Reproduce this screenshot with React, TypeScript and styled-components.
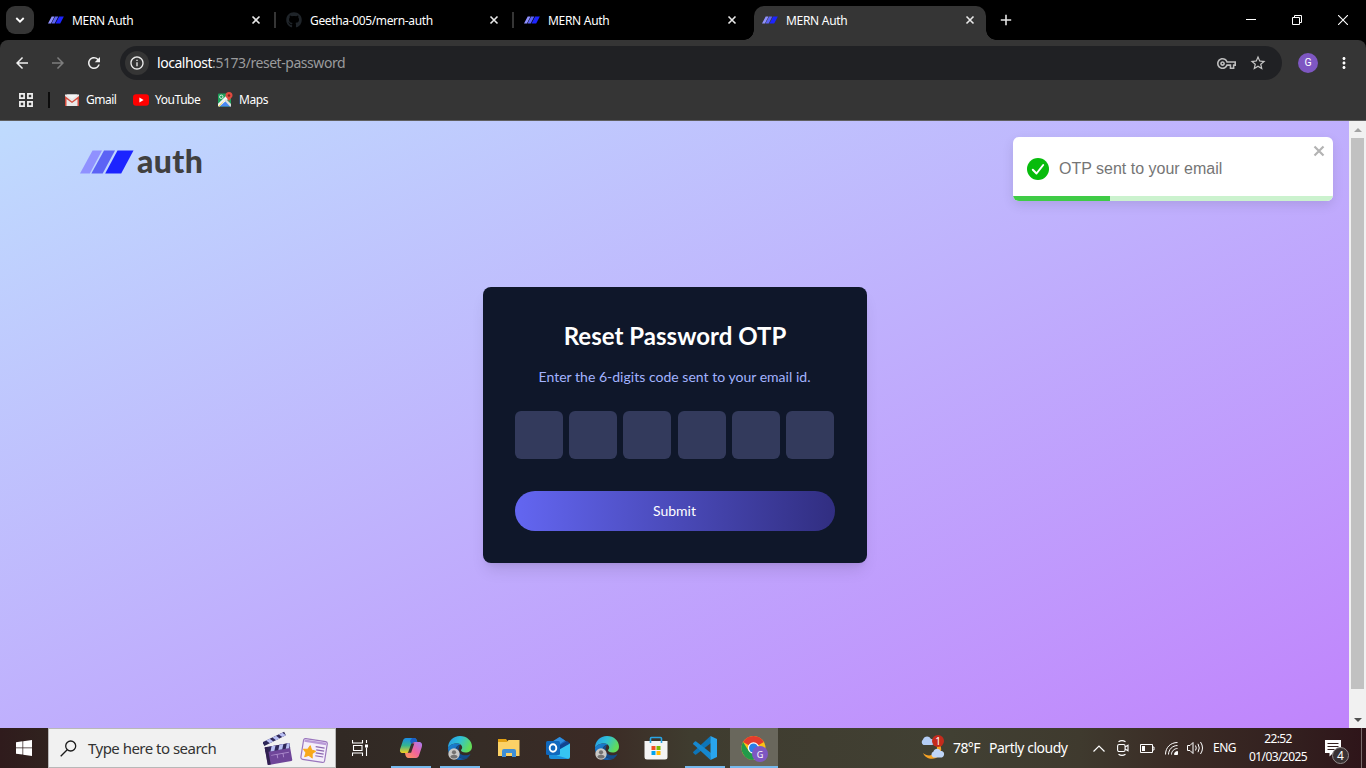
import React from 'react';
import styled, { createGlobalStyle, css } from 'styled-components';
import { MdArrowBack, MdArrowForward, MdRefresh, MdStarBorder, MdOutlineVpnKey, MdMoreVert, MdInfoOutline } from 'react-icons/md';
import { FaGithub } from 'react-icons/fa';

const Global = createGlobalStyle`
  * { box-sizing: border-box; }
  body { margin: 0; overflow: hidden; }
  svg { display: block; flex: none; }
`;

const ui = `"Noto Sans", "Open Sans", sans-serif`;

const Desktop = styled.div`
  width: 1366px;
  height: 768px;
  display: flex;
  flex-direction: column;
  overflow: hidden;
  background: #000;
  font-family: ${ui};
`;

const Label = styled.span<{ $size?: number; $ls?: number; $color?: string }>`
  font-size: ${p => p.$size ?? 12}px;
  letter-spacing: ${p => p.$ls ?? 0}px;
  color: ${p => p.$color ?? '#fff'};
  white-space: nowrap;
  line-height: 20px;
`;

/* ---------- tab strip ---------- */
const TabStrip = styled.header`
  display: flex;
  flex: none;
  height: 40px;
  padding-left: 6px;
  background: #000;
`;
const TabSearch = styled.button`
  width: 28px;
  height: 28px;
  margin: 6px 6px 0 0;
  padding: 0;
  border: 0;
  border-radius: 9px;
  background: #353535;
  display: grid;
  place-items: center;
`;
const Tab = styled.div<{ $active?: boolean; $divider?: boolean }>`
  position: relative;
  width: ${p => (p.$active ? 232 : 238)}px;
  height: ${p => (p.$active ? 34 : 28)}px;
  margin-top: 6px;
  padding: 0 ${p => (p.$active ? 10 : 16)}px 0 8px;
  display: flex;
  align-items: ${p => (p.$active ? 'flex-start' : 'center')};
  ${p => p.$active && css`
    padding-top: 4px;
    border-radius: 10px 10px 0 0;
    background: #353535;
    &::before, &::after {
      content: '';
      position: absolute;
      bottom: 0;
      width: 10px;
      height: 10px;
    }
    &::before { left: -10px; background: radial-gradient(circle at 0 0, transparent 9.5px, #353535 10px); }
    &::after { right: -10px; background: radial-gradient(circle at 100% 0, transparent 9.5px, #353535 10px); }
  `}
  ${p => p.$divider && css`
    &::after {
      content: '';
      position: absolute;
      right: 2px;
      top: 6px;
      width: 2px;
      height: 16px;
      background: #353535;
    }
  `}
`;
const TabBody = styled.div`
  flex: 1;
  height: 20px;
  display: flex;
  align-items: center;
  gap: 8px;
`;
const TabTitle = styled(Label)`
  flex: 1;
  padding-top: 1px;
`;
const NewTab = styled.div`
  width: 40px;
  height: 40px;
  display: grid;
  place-items: center;
`;
const WindowControls = styled.div`
  margin-left: auto;
  display: flex;
`;
const WindowButton = styled.div`
  width: 46px;
  height: 40px;
  display: grid;
  place-items: center;
`;

/* ---------- toolbar ---------- */
const Chrome = styled.div`
  flex: none;
  height: 81px;
  border-radius: 8px 8px 0 0;
  border-bottom: 1px solid #5f5f5f;
  background: #353535;
`;
const Toolbar = styled.div`
  height: 46px;
  padding: 0 12px 0 13px;
  display: flex;
  align-items: center;
`;
const NavButton = styled.div`
  flex: none;
  width: 18px;
  height: 34px;
  margin-right: 18px;
  display: grid;
  place-items: center;
`;
const Omnibox = styled.div`
  flex: none;
  width: 1162px;
  height: 34px;
  margin-left: -1px;
  padding: 0 15px 0 5px;
  border-radius: 17px;
  background: #202124;
  display: flex;
  align-items: center;
`;
const SiteInfo = styled.div`
  width: 24px;
  height: 24px;
  margin-right: 8px;
  border-radius: 50%;
  background: #353535;
  display: grid;
  place-items: center;
`;
const Url = styled(Label)`
  flex: 1;
  b { font-weight: 400; color: #fff; }
`;
const KeyIcon = styled(MdOutlineVpnKey)`
  margin-right: 13px;
`;
const Avatar = styled.div`
  flex: none;
  width: 20px;
  height: 20px;
  margin: 0 17px 0 16px;
  border-radius: 50%;
  background: #7e57c2;
  color: #fff;
  font: 10.5px/20px Roboto, sans-serif;
  text-align: center;
`;
const Bookmarks = styled.div`
  height: 28px;
  padding-left: 19px;
  display: flex;
  align-items: center;
`;
const BookmarkDivider = styled.div`
  width: 2px;
  height: 16px;
  margin: 0 14px 0 15px;
  background: #0c0c0c;
`;
const Bookmark = styled.div<{ $w: number }>`
  width: ${p => p.$w}px;
  display: flex;
  align-items: center;
  gap: 6px;
`;

/* ---------- page ---------- */
const Viewport = styled.div`
  flex: none;
  height: 607px;
  display: flex;
`;
const Page = styled.main`
  position: relative;
  width: 1349px;
  display: flex;
  align-items: center;
  justify-content: center;
  background: linear-gradient(to bottom right, #bfdbfe, #c084fc);
`;
const Brand = styled.div`
  position: absolute;
  left: 80px;
  top: 20px;
  height: 42px;
  display: flex;
  align-items: center;
  gap: 3px;
`;
const BrandName = styled.span`
  font: 900 32px/42px Lato, sans-serif;
  letter-spacing: 0.4px;
  color: #404040;
  margin-top: -2px;
`;
const Card = styled.form`
  width: 384px;
  height: 276px;
  margin-left: 1px;
  padding: 32px;
  border-radius: 8px;
  background: #0f172a;
  box-shadow: 0 10px 15px -3px rgba(0, 0, 0, 0.1), 0 4px 6px -4px rgba(0, 0, 0, 0.1);
  font-family: Lato, sans-serif;
  text-align: center;
`;
const Heading = styled.h1`
  margin: 0 0 16px;
  padding-top: 1px;
  height: 32px;
  font-size: 24px;
  line-height: 32px;
  font-weight: 700;
  letter-spacing: 0.03px;
  color: #fff;
`;
const Hint = styled.p`
  margin: 0 1px 24px 0;
  font-size: 14px;
  line-height: 20px;
  letter-spacing: 0.02px;
  color: #a3b3ff;
`;
const Digits = styled.div`
  display: flex;
  gap: 6.2px;
  margin-bottom: 32px;
`;
const Digit = styled.input`
  width: 48px;
  height: 48px;
  padding: 0;
  border: 0;
  border-radius: 6px;
  background: #333a5c;
`;
const Submit = styled.button`
  display: block;
  width: 320px;
  height: 40px;
  padding: 0 1px 0 0;
  border: 0;
  border-radius: 20px;
  background: linear-gradient(to right, #6366f1, #312e81);
  color: #fff;
  font: 14px/40px Lato, sans-serif;
`;
const ToastFrame = styled.div`
  position: absolute;
  right: 16px;
  top: 16px;
  border-radius: 6px;
  box-shadow: 0 4px 12px rgba(0, 0, 0, 0.1);
`;
const Toast = styled.div`
  position: relative;
  width: 320px;
  height: 64px;
  padding: 0 14px;
  border-radius: 6px;
  overflow: hidden;
  display: flex;
  align-items: center;
  gap: 10px;
  background: #fff;
  color: #757575;
  font: 16px/20px "Liberation Sans", Arial, sans-serif;
`;
const ToastClose = styled.div`
  position: absolute;
  right: 8px;
  top: 8px;
`;
const Progress = styled.div`
  position: absolute;
  left: 0;
  right: 0;
  bottom: 0;
  height: 5px;
  background: linear-gradient(to right, #3fcb46 97px, #cbf2ce 97px);
`;
const Scrollbar = styled.div`
  width: 17px;
  padding: 0 2px;
  background: #f1f1f1;
  display: flex;
  flex-direction: column;
  align-items: center;
`;
const ScrollArrow = styled.div`
  height: 17px;
  display: grid;
  place-items: center;
`;
const Thumb = styled.div`
  width: 13px;
  height: 551px;
  margin-bottom: 22px;
  background: #c1c1c1;
`;

/* ---------- taskbar ---------- */
const Taskbar = styled.footer`
  flex: none;
  height: 40px;
  display: flex;
  align-items: center;
  background: linear-gradient(to right, #2f1b1c 0, #30241f 60px, #312924 340px, #352c26 480px, #3b2a25 600px, #3f3c2f 690px, #414033 950px, #3f3a2e 1080px, #3a2b25 1180px, #33201f 1290px, #2e1419 1366px);
`;
const Start = styled.div`
  width: 48px;
  height: 40px;
  display: grid;
  place-items: center;
`;
const Search = styled.div`
  width: 288px;
  height: 40px;
  padding: 0 7px 0 11px;
  border: 1px solid #b8b8b8;
  background: #f1f1f1;
  display: flex;
  align-items: center;
`;
const SearchText = styled(Label)`
  flex: 1;
  margin-left: 11px;
`;
const SearchArt = styled.div`
  display: flex;
  align-items: flex-end;
  gap: 5px;
  padding-top: 2px;
`;
const TaskView = styled.div`
  width: 51px;
  display: grid;
  place-items: center;
  padding-right: 3px;
`;
const TaskButton = styled.div<{ $open?: boolean; $active?: boolean }>`
  position: relative;
  width: ${p => (p.$active ? 48 : 49)}px;
  height: 40px;
  padding-right: ${p => (p.$active ? 0 : 2)}px;
  display: grid;
  place-items: center;
  background: ${p => (p.$active ? '#69675c' : 'transparent')};
  &::after {
    content: '';
    position: absolute;
    bottom: 0;
    left: ${p => (p.$active ? 0 : 4)}px;
    right: ${p => (p.$active ? 0 : 5)}px;
    height: 2px;
    background: ${p => (p.$open ? '#76b9ed' : 'transparent')};
  }
`;
const Tray = styled.div`
  margin-left: auto;
  width: 446px;
  height: 40px;
  display: flex;
  align-items: center;
`;
const Weather = styled.div`
  position: relative;
  width: 25px;
  margin: -2px 8px 0 0;
`;
const Badge = styled.div<{ $x: number; $y: number; $d: number; $bg: string; $border?: string; $size: number }>`
  position: absolute;
  left: ${p => p.$x}px;
  top: ${p => p.$y}px;
  width: ${p => p.$d}px;
  height: ${p => p.$d}px;
  border-radius: 50%;
  background: ${p => p.$bg};
  border: ${p => (p.$border ? `1px solid ${p.$border}` : '0')};
  color: #fff;
  display: flex;
  align-items: center;
  justify-content: center;
  font-size: ${p => p.$size}px;
  line-height: 1;
`;
const TrayIcon = styled.div<{ $w: number; $start?: boolean }>`
  flex: none;
  width: ${p => p.$w}px;
  display: grid;
  align-items: center;
  justify-content: ${p => (p.$start ? 'start' : 'center')};
`;
const Clock = styled.div`
  flex: none;
  width: 66px;
  display: flex;
  flex-direction: column;
  align-items: center;
  span { line-height: 18px; }
`;
const Notifications = styled.div`
  position: relative;
  width: 24px;
  margin-left: 13px;
`;
const ShowDesktop = styled.div`
  margin-left: auto;
  width: 5px;
  height: 40px;
  border-left: 1px solid #7a6b6c;
`;

const Stripes = ({ w, h }: { w: number; h: number }) => (
  <svg width={w} height={h} viewBox="0 0 54 24">
    <path d="M12.500 0.500H22L9.800 23.500H0Z" fill="#9091ff" />
    <path d="M24 0.500H35L22.700 23.500H11.400Z" fill="#5c63f5" />
    <path d="M37.500 0.500H53.500L41.200 23.500H25.200Z" fill="#1c24ff" />
  </svg>
);

const CloseX = () => (
  <svg width="12" height="12" viewBox="0 0 12 12" stroke="#e8e8e8" strokeWidth="1.600">
    <path d="M2.500 2.500l7 7M9.500 2.500l-7 7" />
  </svg>
);

const Gmail = () => (
  <svg width="16" height="16" viewBox="0 0 16 16">
    <path d="M1 2.500h14v11.500H1z" fill="#e9e9e9" />
    <path d="M1 14V4l7 5.500L15 4v10h-1.500V7L8 11 2.500 7V14z" fill="#d54b3d" />
    <path d="M2.500 2.500h11L8 7z" fill="#f4f4f4" />
  </svg>
);
const YouTube = () => (
  <svg width="16" height="16" viewBox="0 0 16 16">
    <rect y="2.300" width="16" height="11.400" rx="3" fill="#f00" />
    <path d="M6.400 5.600v4.800L10.600 8z" fill="#fff" />
  </svg>
);
const MapsIcon = () => (
  <svg width="16" height="16" viewBox="0 0 16 16">
    <rect x="1" y="1.500" width="13" height="13" rx="1" fill="#1fa05b" />
    <path d="M7.500 8L14 14.500H1.500z" fill="#4a89f3" />
    <path d="M1 14V11.800L11 2l3 2.500L2.500 14.500z" fill="#f5f5f5" />
    <path d="M7.500 8.500L9 7l5 5v2.500h-1z" fill="#ddd" />
    <path d="M1 14.300L2 13.500l5.500-5.300L2.500 14.500z" fill="#fbcf3f" />
    <circle cx="4.300" cy="4.800" r="1.700" fill="none" stroke="#d9f0e2" strokeWidth="1" />
    <path d="M12 0a3.500 3.500 0 0 1 3.500 3.500C15.500 5.700 12.700 6.500 12 10 11.300 6.500 8.500 5.700 8.500 3.500A3.500 3.500 0 0 1 12 0z" fill="#e04a3f" />
    <circle cx="12" cy="3.500" r="1.200" fill="#7d221b" />
  </svg>
);

const Edge = ({ id }: { id: string }) => (
  <svg width="26" height="26" viewBox="0 0 26 26">
    <defs>
      <linearGradient id={`${id}a`} x1="0" y1="0" x2="1" y2="0.4">
        <stop offset="0" stopColor="#2695e8" /><stop offset=".5" stopColor="#2fc0d8" /><stop offset="1" stopColor="#62dc59" />
      </linearGradient>
      <linearGradient id={`${id}b`} x1="0" y1="0" x2="1" y2="1">
        <stop offset="0" stopColor="#1b85d6" /><stop offset="1" stopColor="#0f4f9c" />
      </linearGradient>
    </defs>
    <path d="M1 13C1 6 6 1 13 1s12 5 12 10.500c0 4-3 6-6.500 6-3 0-4.500-1.200-4.500-2.200 0-.8 1.200-1 1.200-2.800 0-2.200-2-4-5-4C5.500 8.500 2 10.500 1 13z" fill={`url(#${id}a)`} />
    <path d="M1 13C2 10.500 5.500 8.500 10 8.500c1.500 0 2.800.5 3.700 1.200C10 10 8.500 13 8.500 15.500c0 5 4 8 8 8 2.500 0 4.500-.7 5.500-1.500C20 24 17 25 13 25 6 25 1 20 1 13z" fill={`url(#${id}b)`} />
    <path d="M13 10c-3 .8-4.500 3-4.500 5.500 0 5 4.500 8 8.500 8 3 0 5.500-2 6.500-4.500-1.500.9-3 1.300-5 1.300-4 0-7-2-7-5.300C11.500 12.500 12.500 11 13 10z" fill="#124c8c" />
    <circle cx="7" cy="19" r="5.700" fill="#c9c8c6" />
    <circle cx="7" cy="17.300" r="2.100" fill="#747271" />
    <path d="M3.300 22c.5-3 7-3 7.400 0-2 2-5.500 2-7.400 0z" fill="#747271" />
  </svg>
);

const Copilot = () => (
  <svg width="24" height="24" viewBox="0 0 24 24">
    <defs>
      <linearGradient id="cpa" x1="0" y1="0" x2="0" y2="1"><stop offset="0" stopColor="#1b8ce8" /><stop offset=".5" stopColor="#35b58f" /><stop offset="1" stopColor="#f4d020" /></linearGradient>
      <linearGradient id="cpb" x1="1" y1="0" x2="0" y2="1"><stop offset="0" stopColor="#a67cf5" /><stop offset=".5" stopColor="#f1639c" /><stop offset="1" stopColor="#ff9a52" /></linearGradient>
    </defs>
    <path d="M7 2h8c2 0 2.700 1.500 3.300 4h-3c-1.800 0-2.500 1.500-3 3l-2 6c-.5 1.500-1.300 2-3 2H4c-3 0-3.500-2-2.700-4.500L4 4.500C4.500 3 5.500 2 7 2z" fill="url(#cpa)" />
    <path d="M13 2h2c2 0 2.700 1.500 3.300 4h-3c-1.500 0-2.300 1-2.800 2.500L11 5z" fill="#1b5ec6" />
    <path d="M17 22H9.500c-2 0-3-1.500-3.500-5h2c2 0 2.500-1 3-2.500l2-6C13.500 7 14.300 6 16 6h4c3 0 3.500 2.500 2.800 5L20 19.500c-.5 1.500-1.500 2.500-3 2.500z" fill="url(#cpb)" />
    <path d="M12 8.500l.7-1h2.600l-3.200 9.300H9z" fill="#38302d" />
  </svg>
);

const Explorer = () => (
  <svg width="24" height="24" viewBox="0 0 24 24">
    <path d="M1 3h8l2 2.500h11V20H1z" fill="#e2a012" />
    <path d="M1 6h9l1.500-2H22.500v16H1z" fill="#fcd266" />
    <path d="M5 21v-6q0-2 2-2h10q2 0 2 2v6h-4v-4H9v4z" fill="#3f8fd6" />
  </svg>
);

const Outlook = () => (
  <svg width="26" height="26" viewBox="0 0 26 26">
    <path d="M4 9L15 2l10 7v12H4z" fill="#1a63b8" />
    <path d="M5 8l9.500-6L20 5.500 9 13z" fill="#2e8fe0" />
    <path d="M14 14L25 8v14q0 2-2 2H10z" fill="#36c5f2" />
    <path d="M25 8.500L10 17v-4l12-7z" fill="#12448e" />
    <path d="M4 18l20 6H6q-2 0-2-2z" fill="#1c8fdc" />
    <rect x="1" y="6" width="14" height="14" rx="1.500" fill="#1068bd" />
    <ellipse cx="8" cy="13" rx="3.300" ry="3.700" fill="none" stroke="#fff" strokeWidth="1.900" />
  </svg>
);

const Store = () => (
  <svg width="24" height="24" viewBox="0 0 24 24">
    <path d="M.5 5h23v16q0 2.500-2.500 2.500H3Q.5 23.500.5 21z" fill="#f4f4f4" />
    <path d="M6.500 7V2.500Q6.500 1.500 7.500 1.500h9q1 0 1 1V7" fill="none" stroke="#2aa5e4" strokeWidth="1.600" />
    <path d="M7.500 10H11.500V14H7.500z" fill="#f25022" /><path d="M12.500 10h4v4h-4z" fill="#7fba00" />
    <path d="M7.500 15h4v4h-4z" fill="#00a4ef" /><path d="M12.500 15h4v4h-4z" fill="#ffb900" />
  </svg>
);

const VSCode = () => (
  <svg width="24" height="24" viewBox="0 0 24 24">
    <path d="M17.500 0L.4 15.700q-.7.700 0 1.400l1.500 1.300q.6.500 1.300 0L18 7z" fill="#0d75b8" />
    <path d="M17.500 24L.4 8.300q-.7-.7 0-1.400l1.500-1.300q.6-.5 1.300 0L18 17z" fill="#1688cf" />
    <path d="M17.500 0L24 3v18l-6.500 3z" fill="#29a5ee" />
  </svg>
);

const ChromeIcon = () => (
  <svg width="26" height="26" viewBox="0 0 26 26">
    <circle cx="12.500" cy="13" r="12" fill="#fbc116" />
    <path d="M12.500 13L2.100 7a12 12 0 0 1 20.800 0z" fill="#e33b2e" />
    <path d="M2.100 7a12 12 0 0 0 10.400 18l5-9.500-10 .3z" fill="#229a4a" />
    <circle cx="12.500" cy="13" r="5.700" fill="#fff" />
    <circle cx="12.500" cy="13" r="4.500" fill="#2b7de9" />
  </svg>
);

const Clapper = () => (
  <svg width="32" height="36" viewBox="0 0 32 36">
    <g transform="rotate(-26 2 14)">
      <rect x="1" y="10.500" width="24" height="4" fill="#2f2859" />
      <path d="M5 10.500h4l2 4H7zM12 10.500h4l2 4h-4zM19 10.500h4l2 4h-4z" fill="#b9bff4" />
    </g>
    <g transform="rotate(-10 4 18)">
      <rect x="2" y="16" width="25" height="18" rx="1" fill="#6f4599" />
      <rect x="2" y="16" width="25" height="5" fill="#2f2859" />
      <path d="M9 16h4l-2 5H7zM17 16h4l-2 5h-4zM24.500 16H27v2l-1 3h-3.500z" fill="#b9bff4" />
      <path d="M2 16h3v18H2z" fill="#30204f" />
      <path d="M7 25h18M13 25v4M19 25v4" stroke="#a988ca" strokeWidth="1" />
    </g>
  </svg>
);
const News = () => (
  <svg width="28" height="29" viewBox="0 0 28 29">
    <g transform="rotate(9 14 13)">
      <rect x="2" y="2" width="24" height="21" rx="2" fill="#f4eefb" stroke="#9a76bd" strokeWidth="1.200" />
      <path d="M3 3h22v2.500H3z" fill="#b99ad8" />
      <path d="M15 8.500h9M16 11.500h8M16 14.500h8M16 17.500h8" stroke="#8a68ae" strokeWidth="1.200" />
      <path d="M9.500 8.500l1.900 3.800 4.200.6-3 3 .7 4.200-3.800-2-3.800 2 .7-4.200-3-3 4.200-.6z" fill="#f8a91b" stroke="#f8a91b" strokeLinejoin="round" />
    </g>
  </svg>
);

const WeatherIcon = () => (
  <svg width="25" height="24" viewBox="0 0 25 24">
    <path d="M14 7c4 3 4 9 0 12-3 2-8 2-11-1 2 5 8 7 13 5 6-3 7-11 2-16z" fill="#f7a325" />
    <path d="M3.500 10A3.300 3.300 0 0 1 3 4.500C4 1 9 0 11 4c3 0 4 2 3.500 4-.3 1.300-1.300 2-2.500 2z" fill="#b4cdf5" />
    <path d="M13.500 22.500a3.200 3.200 0 0 1 0-6c1-3.500 6-3.500 7-.5 3 0 4 2 3.500 4s-2 2.500-3 2.500z" fill="#bfd5f7" />
  </svg>
);

const tabs = [
  { title: 'MERN Auth', divider: true, ls: -0.3 },
  { title: 'Geetha-005/mern-auth', divider: true, github: true, ls: -0.35 },
  { title: 'MERN Auth', ls: -0.3 },
  { title: 'MERN Auth', active: true, ls: -0.3 },
];

export default function App() {
  return (
    <Desktop>
      <Global />
      <TabStrip>
        <TabSearch aria-label="Search tabs">
          <svg width="10" height="8" viewBox="0 0 10 8" fill="none" stroke="#fff" strokeWidth="1.800"><path d="M1.300 2L5 5.700 8.700 2" /></svg>
        </TabSearch>
        {tabs.map((t, i) => (
          <Tab key={i} $active={t.active} $divider={t.divider}>
            <TabBody>
              {t.github ? <FaGithub size={16} color="#1f2429" /> : <Stripes w={16} h={8} />}
              <TabTitle $ls={t.ls}>{t.title}</TabTitle>
              <CloseX />
            </TabBody>
          </Tab>
        ))}
        <NewTab>
          <svg width="12" height="12" viewBox="0 0 12 12" stroke="#e3e3e3" strokeWidth="1.600"><path d="M6 .8v10.400M.8 6h10.400" /></svg>
        </NewTab>
        <WindowControls>
          <WindowButton><svg width="10" height="10"><path d="M0 4.500h10" stroke="#fff" /></svg></WindowButton>
          <WindowButton><svg width="10" height="10" fill="none" stroke="#fff"><path d="M.5 2.500h7v7h-7zM2.500 2.500v-2h7v7h-2" /></svg></WindowButton>
          <WindowButton><svg width="10" height="10" stroke="#fff" strokeWidth="1.100"><path d="M0 0l10 10M10 0L0 10" /></svg></WindowButton>
        </WindowControls>
      </TabStrip>

      <Chrome>
        <Toolbar>
          <NavButton><MdArrowBack size={18} color="#f0f0f0" /></NavButton>
          <NavButton><MdArrowForward size={18} color="#7d7d7d" /></NavButton>
          <NavButton><MdRefresh size={18} color="#f0f0f0" /></NavButton>
          <Omnibox>
            <SiteInfo><MdInfoOutline size={16} color="#ececec" /></SiteInfo>
            <Url $size={14} $ls={-0.45} $color="#9a9b9d"><b>localhost</b>:5173/reset-password</Url>
            <KeyIcon size={19} color="#bdbdbd" />
            <MdStarBorder size={18} color="#c7c7c7" />
          </Omnibox>
          <Avatar>G</Avatar>
          <MdMoreVert size={18} color="#fff" />
        </Toolbar>
        <Bookmarks>
          <svg width="14" height="14" fill="none" stroke="#f0f0f0" strokeWidth="1.700">
            <path d="M.9.9h4.200v4.200H.9zM8.900.9h4.200v4.200H8.900zM.9 8.900h4.200v4.200H.9zM8.900 8.900h4.200v4.200H8.900z" />
          </svg>
          <BookmarkDivider />
          <Bookmark $w={69}><Gmail /><Label $ls={-0.5}>Gmail</Label></Bookmark>
          <Bookmark $w={84}><YouTube /><Label $ls={-0.45}>YouTube</Label></Bookmark>
          <Bookmark $w={60}><MapsIcon /><Label $ls={-0.4}>Maps</Label></Bookmark>
        </Bookmarks>
      </Chrome>

      <Viewport>
        <Page>
          <Brand><Stripes w={54} h={24} /><BrandName>auth</BrandName></Brand>
          <Card>
            <Heading>Reset Password OTP</Heading>
            <Hint>Enter the 6-digits code sent to your email id.</Hint>
            <Digits>{[0, 1, 2, 3, 4, 5].map(n => <Digit key={n} maxLength={1} aria-label={`Digit ${n + 1}`} />)}</Digits>
            <Submit type="button">Submit</Submit>
          </Card>
          <ToastFrame>
            <Toast>
              <svg width="22" height="22" viewBox="0 0 22 22">
                <circle cx="11" cy="11" r="11" fill="#07bc0c" />
                <path d="M5.800 11.800l3.700 3.700 6.700-8.500" fill="none" stroke="#fff" strokeWidth="2" strokeLinecap="round" strokeLinejoin="round" />
              </svg>
              <span>OTP sent to your email</span>
              <ToastClose>
                <svg width="12" height="12" stroke="#b3b3b3" strokeWidth="2.200"><path d="M1.500 1.500l9 9M10.500 1.500l-9 9" /></svg>
              </ToastClose>
              <Progress />
            </Toast>
          </ToastFrame>
        </Page>
        <Scrollbar>
          <ScrollArrow><svg width="8" height="4"><path d="M4 0l4 4H0z" fill="#a3a3a3" /></svg></ScrollArrow>
          <Thumb />
          <ScrollArrow><svg width="8" height="4"><path d="M4 4l4-4H0z" fill="#505050" /></svg></ScrollArrow>
        </Scrollbar>
      </Viewport>

      <Taskbar>
        <Start>
          <svg width="16" height="16" viewBox="0 0 16 16" fill="#fff"><path d="M0 2.200l6.500-.9v6.200H0zM7.200 1.200L16 0v7.500H7.200zM0 8.300h6.500v6.300L0 13.700zM7.200 8.300H16V16l-8.800-1.200z" /></svg>
        </Start>
        <Search>
          <svg width="17" height="17" viewBox="0 0 17 17" fill="none" stroke="#1b1b1b" strokeWidth="1.300"><circle cx="10.700" cy="6" r="5" /><path d="M7.200 9.700L.7 16.200" /></svg>
          <SearchText $size={15} $ls={-0.52} $color="#333">Type here to search</SearchText>
          <SearchArt><Clapper /><News /></SearchArt>
        </Search>
        <TaskView>
          <svg width="17" height="16" fill="none" stroke="#fff" strokeWidth="1.100">
            <path d="M.5 0v3h10V0M.5 16v-3h10v3M1.500 5.500h8.500v5H1.500zM14.500 0v3M14.500 7.500V16" /><path d="M13 4.500h3v3h-3z" fill="#fff" stroke="none" />
          </svg>
        </TaskView>
        <TaskButton $open><Copilot /></TaskButton>
        <TaskButton $open><Edge id="e1" /></TaskButton>
        <TaskButton><Explorer /></TaskButton>
        <TaskButton><Outlook /></TaskButton>
        <TaskButton><Edge id="e2" /></TaskButton>
        <TaskButton><Store /></TaskButton>
        <TaskButton $open><VSCode /></TaskButton>
        <TaskButton $open $active>
          <ChromeIcon />
          <Badge $x={22} $y={18} $d={16} $bg="#7e57c2" $size={9}>G</Badge>
        </TaskButton>
        <Tray>
          <Weather><WeatherIcon /><Badge $x={12} $y={0} $d={12} $bg="#c42b1c" $size={10}>1</Badge></Weather>
          <TrayIcon $w={36} $start><Label $size={14} $ls={-0.6}>78°F</Label></TrayIcon>
          <TrayIcon $w={102} $start><Label $size={14} $ls={-0.48}>Partly cloudy</Label></TrayIcon>
          <TrayIcon $w={16}><svg width="12" height="7" fill="none" stroke="#fff" strokeWidth="1.200"><path d="M.5 6.500L6 1l5.500 5.500" /></svg></TrayIcon>
          <TrayIcon $w={32}>
            <svg width="12" height="16" fill="none" stroke="#fff" strokeWidth="1.100"><rect x=".6" y="4.500" width="7.500" height="7" rx="1.500" /><path d="M8 7l3-1.800v5.600L8 9M1.500 1.800Q5-.6 8.500 1.800M1.500 14.200q3.500 2.400 7 0" /></svg>
          </TrayIcon>
          <TrayIcon $w={17}>
            <svg width="15" height="10" fill="none" stroke="#fff"><path d="M.5 1.500h12v8H.5zM12.500 4h1.500v3h-1.500" /><path d="M2 3h3v5H2z" fill="#fff" stroke="none" /></svg>
          </TrayIcon>
          <TrayIcon $w={31}>
            <svg width="13" height="13" viewBox="0 0 13 13" fill="none" stroke="#fff"><path d="M12.500.5C5.500.5.5 5.500.5 12.500M12.500 3.500c-5 0-9 4-9 9M12.500 6.500c-3.300 0-6 2.700-6 6" /><path d="M12.500 9.500q-3 0-3 3h3z" fill="#fff" /></svg>
          </TrayIcon>
          <TrayIcon $w={17}>
            <svg width="17" height="14" fill="none" stroke="#fff"><path d="M.5 4.500h2.500L6 1.500v11L3 9.500H.5zM8.500 4.500q1.500 2.500 0 5M11 2.800q2.500 4.200 0 8.400M13.500 1q4 6 0 12" /></svg>
          </TrayIcon>
          <TrayIcon $w={41}><Label $ls={-0.5}>ENG</Label></TrayIcon>
          <Clock><Label $ls={-0.6}>22:52</Label><Label $ls={-0.58}>01/03/2025</Label></Clock>
          <Notifications>
            <svg width="24" height="24" viewBox="0 0 24 24"><path d="M1 4h16v13H9l-3.500 3.500V17H1z" fill="#fff" /><path d="M3.500 7.500h11M3.500 10.500h11M3.500 13.500h7" stroke="#35201f" /></svg>
            <Badge $x={8} $y={11} $d={17} $bg="#3a3233" $border="#948d8d" $size={12}>4</Badge>
          </Notifications>
          <ShowDesktop />
        </Tray>
      </Taskbar>
    </Desktop>
  );
}
